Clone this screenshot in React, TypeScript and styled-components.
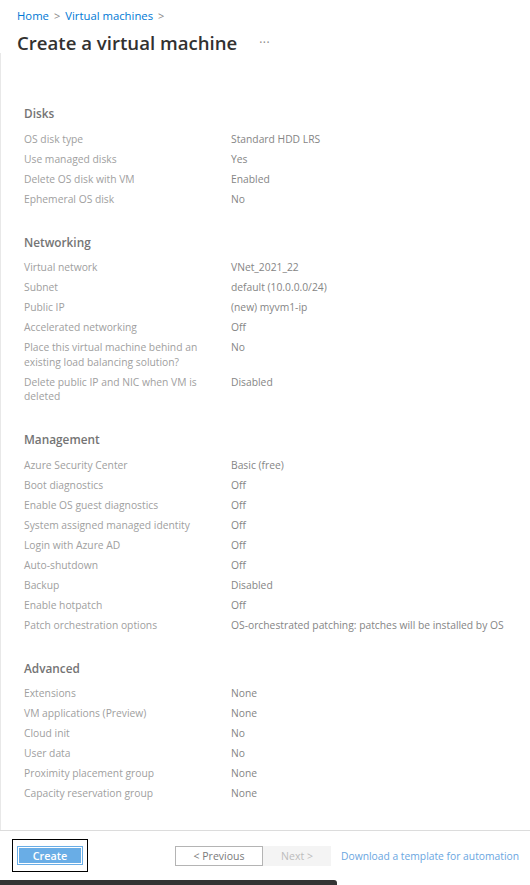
import React from 'react'
import styled, { createGlobalStyle } from 'styled-components'

const GlobalStyle = createGlobalStyle`
  html, body {
    margin: 0;
    padding: 0;
    background: #ffffff;
    font-family: "Open Sans", "Noto Sans", Arial, sans-serif;
  }
`

const Page = styled.div`
  width: 530px;
  height: 885px;
  display: flex;
  flex-direction: column;
  overflow: hidden;
  box-sizing: border-box;
`

const Header = styled.div`
  padding: 8px 0 0 17px;
`

const Breadcrumb = styled.div`
  display: flex;
  align-items: center;
  gap: 5px;
  font-size: 11.3px;
  line-height: 16px;
  color: #0078d4;
`

const Chevron = styled.span`
  color: #8a8886;
  font-size: 11px;
`

const TitleRow = styled.div`
  display: flex;
  align-items: center;
  margin-top: 7px;
  height: 22px;
`

const Title = styled.h1`
  margin: 0;
  font-size: 18.6px;
  font-weight: 600;
  color: #323130;
`

const More = styled.span`
  margin-left: 22px;
  color: #8a8886;
  font-size: 12px;
  letter-spacing: 0.5px;
`

const Content = styled.div`
  flex: 1;
  border-left: 1px solid #e8e8e8;
  padding: 52px 0 0 23px;
`

const Section = styled.section`
  margin-bottom: 22px;
`

const Heading = styled.h2`
  margin: 0 0 10.5px;
  font-size: 11.8px;
  line-height: 16px;
  font-weight: 600;
  color: #747474;
`

const Row = styled.div`
  display: grid;
  grid-template-columns: 207px 1fr;
  font-size: 10.3px;
  line-height: 14.5px;
  padding-bottom: 5.5px;
`

const Label = styled.div`
  color: #a0a0a0;
  padding-right: 12px;
`

const Value = styled.div`
  color: #858585;
  white-space: nowrap;
`

const Footer = styled.div`
  height: 50px;
  border-top: 1.5px solid #dcdcdc;
  display: flex;
  align-items: center;
  padding: 0 0 0 12px;
  box-sizing: border-box;
`

const FocusRing = styled.div`
  border: 1px solid #000;
  padding: 6px 4px 6px 4px;
  display: flex;
`

const PrimaryButton = styled.button`
  width: 66px;
  height: 19px;
  background: #69ade6;
  color: #fff;
  border: 1px solid #69ade6;
  box-shadow: inset 0 0 0 1px #ffffff;
  font-family: inherit;
  font-size: 10.8px;
  font-weight: 600;
  padding: 0;
`

const Nav = styled.div`
  display: flex;
  align-items: center;
  margin-left: 87px;
`

const SecondaryButton = styled.button<{ $disabled?: boolean }>`
  height: 20px;
  width: ${p => (p.$disabled ? '68px' : '88px')};
  padding: 0;
  font-family: inherit;
  font-size: 10.5px;
  background: ${p => (p.$disabled ? '#f4f4f4' : '#ffffff')};
  color: ${p => (p.$disabled ? '#bcbcbc' : '#7a7a7a')};
  border: 1px solid ${p => (p.$disabled ? '#f4f4f4' : '#b4b4b4')};
`

const Link = styled.a`
  margin-left: 10px;
  color: #6aa6df;
  font-size: 10.3px;
  text-decoration: none;
  white-space: nowrap;
`

const ScrollBar = styled.div`
  height: 5px;
  width: 337px;
  background: #333333;
  border-top-right-radius: 3px;
  flex-shrink: 0;
`

type Item = [string, string]

const sections: { title: string; rows: Item[] }[] = [
  {
    title: 'Disks',
    rows: [
      ['OS disk type', 'Standard HDD LRS'],
      ['Use managed disks', 'Yes'],
      ['Delete OS disk with VM', 'Enabled'],
      ['Ephemeral OS disk', 'No'],
    ],
  },
  {
    title: 'Networking',
    rows: [
      ['Virtual network', 'VNet_2021_22'],
      ['Subnet', 'default (10.0.0.0/24)'],
      ['Public IP', '(new) myvm1-ip'],
      ['Accelerated networking', 'Off'],
      ['Place this virtual machine behind an existing load balancing solution?', 'No'],
      ['Delete public IP and NIC when VM is deleted', 'Disabled'],
    ],
  },
  {
    title: 'Management',
    rows: [
      ['Azure Security Center', 'Basic (free)'],
      ['Boot diagnostics', 'Off'],
      ['Enable OS guest diagnostics', 'Off'],
      ['System assigned managed identity', 'Off'],
      ['Login with Azure AD', 'Off'],
      ['Auto-shutdown', 'Off'],
      ['Backup', 'Disabled'],
      ['Enable hotpatch', 'Off'],
      ['Patch orchestration options', 'OS-orchestrated patching: patches will be installed by OS'],
    ],
  },
  {
    title: 'Advanced',
    rows: [
      ['Extensions', 'None'],
      ['VM applications (Preview)', 'None'],
      ['Cloud init', 'No'],
      ['User data', 'No'],
      ['Proximity placement group', 'None'],
      ['Capacity reservation group', 'None'],
    ],
  },
]

export default function App() {
  return (
    <>
      <GlobalStyle />
      <Page>
        <Header>
          <Breadcrumb>
            <span>Home</span>
            <Chevron>&gt;</Chevron>
            <span>Virtual machines</span>
            <Chevron>&gt;</Chevron>
          </Breadcrumb>
          <TitleRow>
            <Title>Create a virtual machine</Title>
            <More>···</More>
          </TitleRow>
        </Header>
        <Content>
          {sections.map(s => (
            <Section key={s.title}>
              <Heading>{s.title}</Heading>
              {s.rows.map(([label, value]) => (
                <Row key={label}>
                  <Label>{label}</Label>
                  <Value>{value}</Value>
                </Row>
              ))}
            </Section>
          ))}
        </Content>
        <Footer>
          <FocusRing>
            <PrimaryButton>Create</PrimaryButton>
          </FocusRing>
          <Nav>
            <SecondaryButton>&lt; Previous</SecondaryButton>
            <SecondaryButton $disabled>Next &gt;</SecondaryButton>
            <Link href="#">Download a template for automation</Link>
          </Nav>
        </Footer>
        <ScrollBar />
      </Page>
    </>
  )
}
